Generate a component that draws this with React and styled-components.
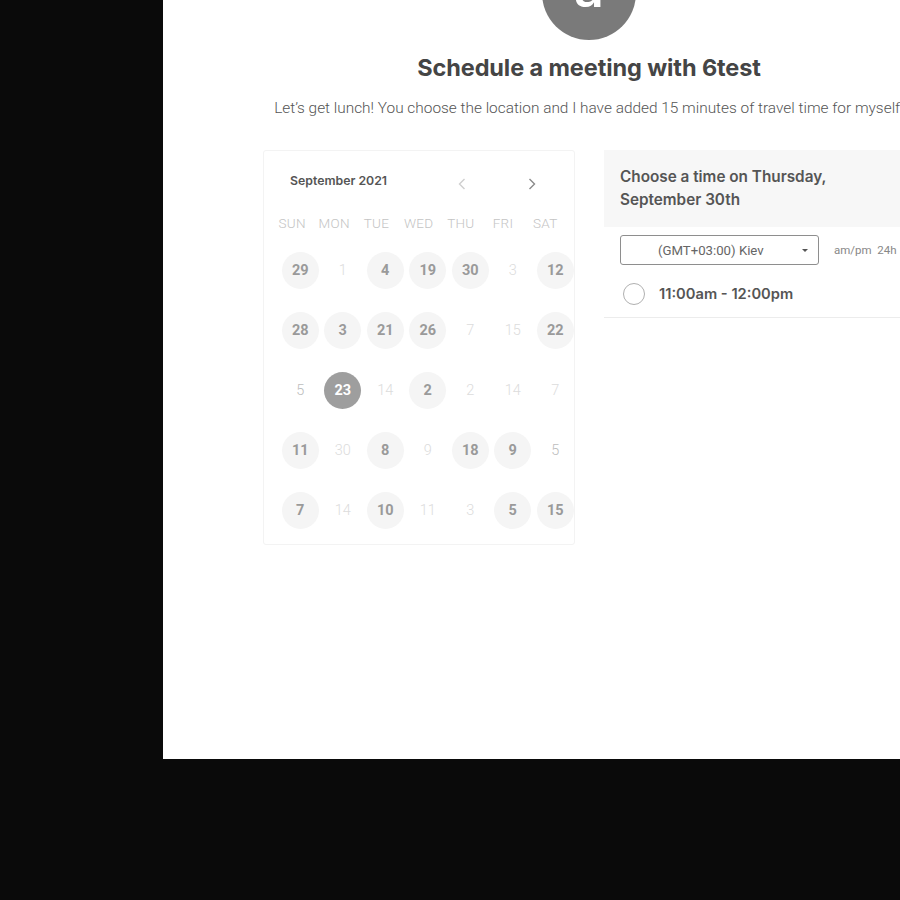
import React from 'react';
import styled, { createGlobalStyle } from 'styled-components';

const GlobalStyle = createGlobalStyle`
  html, body {
    margin: 0;
    padding: 0;
    background: #0a0a0a;
    overflow: hidden;
  }
  body {
    font-family: Roboto, "Liberation Sans", sans-serif;
  }
`;

const weeks = [
  [['29', 'on'], ['1', 'off'], ['4', 'on'], ['19', 'on'], ['30', 'on'], ['3', 'off'], ['12', 'on']],
  [['28', 'on'], ['3', 'on'], ['21', 'on'], ['26', 'on'], ['7', 'off'], ['15', 'off'], ['22', 'on']],
  [['5', 'dim'], ['23', 'sel'], ['14', 'off'], ['2', 'on'], ['2', 'off'], ['14', 'off'], ['7', 'off']],
  [['11', 'on'], ['30', 'off'], ['8', 'on'], ['9', 'off'], ['18', 'on'], ['9', 'on'], ['5', 'dim']],
  [['7', 'on'], ['14', 'off'], ['10', 'on'], ['11', 'off'], ['3', 'off'], ['5', 'on'], ['15', 'on']],
];

const dayNames = ['SUN', 'MON', 'TUE', 'WED', 'THU', 'FRI', 'SAT'];

const App = () => {
  return (
    <>
      <GlobalStyle />
      <Screen>
        <Panel>
          <Avatar>a</Avatar>
          <Title>Schedule a meeting with 6test</Title>
          <Subtitle>
            Let’s get lunch! You choose the location and I have added 15 minutes of travel time for myself.
          </Subtitle>
          <Columns>
            <CalendarCard>
              <CalHeader>
                <MonthLabel>September 2021</MonthLabel>
                <NavArrows>
                  <Arrow $muted>
                    <svg width="8" height="12" viewBox="0 0 8 12" fill="none">
                      <path d="M6.5 1L1.5 6l5 5" stroke="currentColor" strokeWidth="1.4" />
                    </svg>
                  </Arrow>
                  <Arrow>
                    <svg width="8" height="12" viewBox="0 0 8 12" fill="none">
                      <path d="M1.5 1l5 5-5 5" stroke="currentColor" strokeWidth="1.4" />
                    </svg>
                  </Arrow>
                </NavArrows>
              </CalHeader>
              <WeekdayRow>
                {dayNames.map((d) => (
                  <Weekday key={d}>{d}</Weekday>
                ))}
              </WeekdayRow>
              <DayGrid>
                {weeks.flat().map(([n, kind], i) => (
                  <DayCell key={i}>
                    <Day $kind={kind}>{n}</Day>
                  </DayCell>
                ))}
              </DayGrid>
            </CalendarCard>
            <TimesPane>
              <TimesHeader>Choose a time on Thursday, September 30th</TimesHeader>
              <ZoneRow>
                <ZoneSelect>
                  <span>(GMT+03:00) Kiev</span>
                  <Caret />
                </ZoneSelect>
                <FormatToggle>am/pm&nbsp;&nbsp;24h</FormatToggle>
              </ZoneRow>
              <SlotRow>
                <Radio />
                <SlotLabel>11:00am - 12:00pm</SlotLabel>
              </SlotRow>
            </TimesPane>
          </Columns>
        </Panel>
      </Screen>
    </>
  );
};

const Screen = styled.div`
  width: 900px;
  height: 900px;
  overflow: hidden;
`;

const Panel = styled.div`
  margin-left: 163px;
  width: 852px;
  height: 759px;
  background: #fff;
  display: flex;
  flex-direction: column;
  align-items: center;
  overflow: hidden;
`;

const Avatar = styled.div`
  margin-top: -54px;
  width: 94px;
  height: 94px;
  border-radius: 50%;
  background: #7a7a7a;
  color: #fff;
  font-family: Inter, "Liberation Sans", sans-serif;
  font-size: 52px;
  font-weight: 600;
  display: flex;
  align-items: center;
  justify-content: center;
  line-height: 1;
  padding-bottom: 8px;
  box-sizing: border-box;
`;

const Title = styled.h1`
  margin: 13px 0 0;
  font-family: Inter, "Liberation Sans", sans-serif;
  font-size: 23.5px;
  font-weight: 700;
  color: #454545;
  letter-spacing: -0.1px;
`;

const Subtitle = styled.p`
  margin: 17px 0 0;
  font-size: 15.4px;
  font-weight: 300;
  color: #555;
  white-space: nowrap;
`;

const Columns = styled.div`
  margin-top: 33px;
  width: 652px;
  display: flex;
  gap: 29px;
  align-items: flex-start;
`;

const CalendarCard = styled.div`
  width: 312px;
  height: 395px;
  box-sizing: border-box;
  border: 1px solid #f3f3f3;
  border-radius: 3px;
  padding: 19px 0 0 0;
`;

const CalHeader = styled.div`
  display: flex;
  align-items: center;
  padding: 0 0 0 26px;
`;

const MonthLabel = styled.div`
  font-family: Inter, "Liberation Sans", sans-serif;
  font-size: 12.3px;
  font-weight: 600;
  color: #555;
  width: 168px;
`;

const NavArrows = styled.div`
  display: flex;
  gap: 62px;
  padding-top: 8px;
`;

const Arrow = styled.span`
  color: ${(p) => (p.$muted ? '#cfcfcf' : '#8a8a8a')};
  display: flex;
`;

const WeekdayRow = styled.div`
  display: grid;
  grid-template-columns: repeat(7, 42.2px);
  padding-left: 7px;
  margin-top: 25px;
`;

const Weekday = styled.div`
  text-align: center;
  font-size: 13.5px;
  font-weight: 300;
  color: #c4c4c4;
  letter-spacing: 0.3px;
`;

const DayGrid = styled.div`
  display: grid;
  grid-template-columns: repeat(7, 42.5px);
  grid-auto-rows: 60px;
  padding-left: 15px;
  margin-top: 9px;
`;

const DayCell = styled.div`
  display: flex;
  align-items: center;
  justify-content: center;
`;

const Day = styled.div`
  width: 37px;
  height: 37px;
  border-radius: 50%;
  display: flex;
  align-items: center;
  justify-content: center;
  font-size: 14.5px;
  font-weight: ${(p) => (p.$kind === 'on' || p.$kind === 'sel' ? 700 : 300)};
  background: ${(p) =>
    p.$kind === 'sel' ? '#9e9e9e' : p.$kind === 'on' ? '#f5f5f5' : 'transparent'};
  color: ${(p) =>
    p.$kind === 'sel'
      ? '#fff'
      : p.$kind === 'on'
      ? '#9a9a9a'
      : p.$kind === 'dim'
      ? '#bdbdbd'
      : '#dcdcdc'};
`;

const TimesPane = styled.div`
  flex: 1;
  border-bottom: 1px solid #ececec;
  padding-bottom: 12px;
`;

const TimesHeader = styled.div`
  background: #f7f7f7;
  padding: 15px 50px 16px 16px;
  font-family: Inter, "Liberation Sans", sans-serif;
  font-size: 15.3px;
  font-weight: 600;
  line-height: 23px;
  color: #555;
`;

const ZoneRow = styled.div`
  display: flex;
  align-items: center;
  gap: 15px;
  padding: 8px 0 0 16px;
`;

const ZoneSelect = styled.div`
  width: 199px;
  height: 30px;
  box-sizing: border-box;
  border: 1px solid #8e8e8e;
  border-radius: 3px;
  display: flex;
  align-items: center;
  padding: 0 10px 0 37px;
  font-size: 13.2px;
  color: #666;
  span {
    flex: 1;
  }
`;

const Caret = styled.span`
  flex: none !important;
  width: 0;
  height: 0;
  border-left: 3px solid transparent;
  border-right: 3px solid transparent;
  border-top: 3.5px solid #555;
`;

const FormatToggle = styled.div`
  font-size: 11.5px;
  color: #888;
  white-space: nowrap;
`;

const SlotRow = styled.div`
  display: flex;
  align-items: center;
  gap: 14px;
  padding: 18px 0 0 19px;
`;

const Radio = styled.span`
  width: 22px;
  height: 22px;
  border-radius: 50%;
  border: 1.5px solid #b0b0b0;
  box-sizing: border-box;
`;

const SlotLabel = styled.div`
  font-family: Inter, "Liberation Sans", sans-serif;
  font-size: 14.7px;
  font-weight: 600;
  color: #555;
`;

export default App;
